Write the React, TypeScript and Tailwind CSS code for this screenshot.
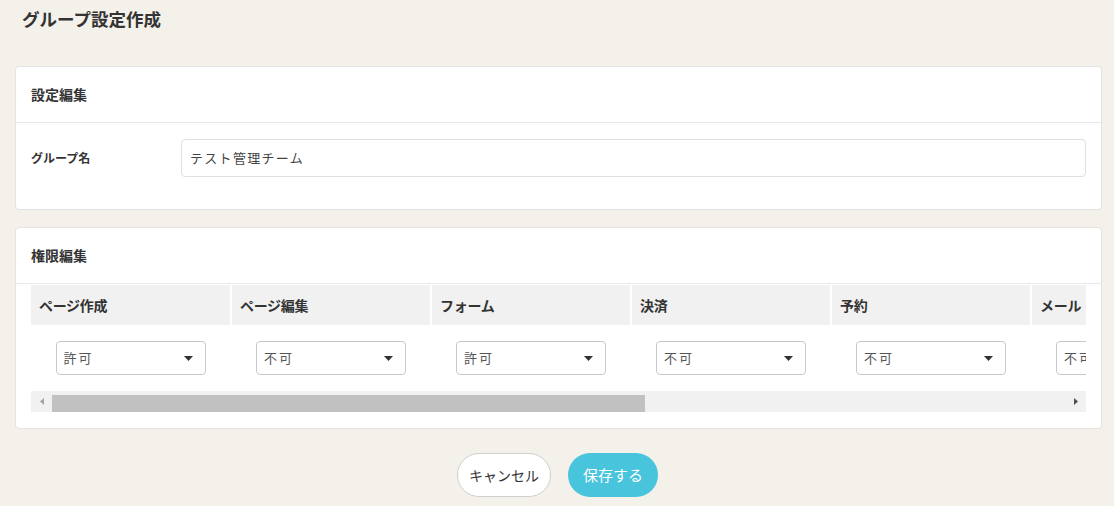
import React from 'react';

const font = { fontFamily: '"Noto Sans CJK JP", "Noto Sans", sans-serif' };

const permissions = [
  { name: 'ページ作成', value: '許可' },
  { name: 'ページ編集', value: '不可' },
  { name: 'フォーム', value: '許可' },
  { name: '決済', value: '不可' },
  { name: '予約', value: '不可' },
  { name: 'メール・配信', value: '不可' },
];

function Caret() {
  return (
    <svg width="9" height="5" viewBox="0 0 9 5" className="shrink-0">
      <path d="M0 0 L9 0 L4.5 5 Z" fill="#333" />
    </svg>
  );
}

function SelectBox({ value }: { value: string }) {
  return (
    <div className="flex h-[34px] w-[150px] shrink-0 items-center justify-between rounded-[4px] border border-[#c8c8c8] bg-white pl-[7px] pr-[12px]">
      <span className="text-[13px] tracking-[2px] text-[#555]">{value}</span>
      <Caret />
    </div>
  );
}

export default function App() {
  return (
    <main className="min-h-[506px] bg-[#f4f1ea] pl-[15px] pr-[12px] pb-[8px]" style={font}>
      <h1 className="pl-[7px] pt-[6px] text-[17.5px] font-bold leading-[26px] text-[#333]">グループ設定作成</h1>

      <div className="mt-[34px] rounded-[4px] border border-[#e3e3e3] bg-white">
        <div className="flex h-[56px] items-center border-b border-[#e8e8e8] px-[15px]">
          <h2 className="text-[14px] font-bold text-[#333]">設定編集</h2>
        </div>
        <div className="flex items-center px-[15px] pt-[16px] pb-[32px]">
          <label className="w-[150px] shrink-0 text-[12px] font-bold text-[#333]">グループ名</label>
          <div className="flex h-[38px] flex-1 items-center rounded-[4px] border border-[#e0e0e0] bg-white pl-[8px]">
            <span className="text-[13px] tracking-[1.3px] text-[#444]">テスト管理チーム</span>
          </div>
        </div>
      </div>

      <div className="mt-[17px] rounded-[4px] border border-[#e3e3e3] bg-white">
        <div className="flex h-[56px] items-center border-b border-[#e8e8e8] px-[15px]">
          <h2 className="text-[14px] font-bold text-[#333]">権限編集</h2>
        </div>
        <div className="px-[15px] pb-[16px] pt-[1px]">
          <div className="overflow-hidden">
            <div className="flex">
              {permissions.map((p, i) => (
                <div
                  key={p.name}
                  className={`${i === 0 ? 'w-[201px]' : 'w-[200px]'} shrink-0 border-r-2 border-white`}
                >
                  <div className="flex h-[40px] items-center whitespace-nowrap bg-[#f1f1f1] pl-[8px] text-[14px] font-bold tracking-[-0.3px] text-[#333]">
                    {p.name}
                  </div>
                  <div className="flex h-[66px] items-center justify-center">
                    <SelectBox value={p.value} />
                  </div>
                </div>
              ))}
            </div>
          </div>
          <div className="flex h-[21px] items-center bg-[#f1f1f1]">
            <div className="flex w-[21px] shrink-0 items-center justify-center">
              <svg width="4" height="7" viewBox="0 0 4 7">
                <path d="M4 0 L0 3.5 L4 7 Z" fill="#a3a3a3" />
              </svg>
            </div>
            <div className="h-[17px] w-[593px] self-end bg-[#c1c1c1]" />
            <div className="flex-1" />
            <div className="flex w-[21px] shrink-0 items-center justify-center">
              <svg width="4" height="7" viewBox="0 0 4 7">
                <path d="M0 0 L4 3.5 L0 7 Z" fill="#505050" />
              </svg>
            </div>
          </div>
        </div>
      </div>

      <div className="mt-[24px] flex justify-center gap-[17px] pr-[2px]">
        <button className="h-[44px] w-[94px] rounded-full border border-[#cfcfcf] bg-white text-[14px] text-[#333]">
          キャンセル
        </button>
        <button className="h-[44px] w-[90px] rounded-full bg-[#48c4dd] text-[15px] text-white">
          保存する
        </button>
      </div>
    </main>
  );
}
